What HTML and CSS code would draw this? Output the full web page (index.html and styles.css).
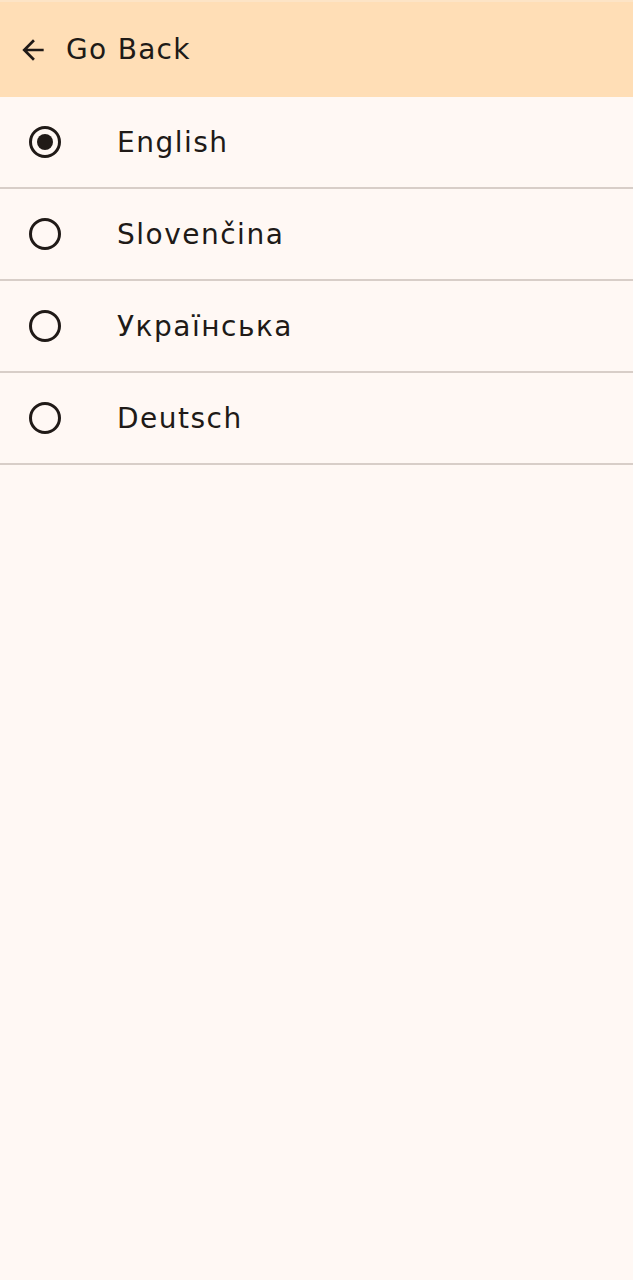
FILE: index.html
```html
<!DOCTYPE html>
<html lang="en">
<head>
<meta charset="utf-8">
<title>Language</title>
<link rel="stylesheet" href="styles.css">
</head>
<body>
<header class="topbar">
  <button class="back" type="button">
    <svg class="back-icon" viewBox="0 0 24 24" width="32" height="32" aria-hidden="true">
      <path d="M20 11H7.83l5.59-5.59L12 4l-8 8 8 8 1.41-1.41L7.83 13H20v-2z" fill="currentColor"/>
    </svg>
    <span class="back-label">Go Back</span>
  </button>
</header>
<main class="list">
  <label class="row">
    <span class="radio checked"><span class="dot"></span></span>
    <span class="label">English</span>
  </label>
  <label class="row">
    <span class="radio"></span>
    <span class="label">Slovenčina</span>
  </label>
  <label class="row">
    <span class="radio"></span>
    <span class="label">Українська</span>
  </label>
  <label class="row">
    <span class="radio"></span>
    <span class="label">Deutsch</span>
  </label>
</main>
</body>
</html>
```
FILE: styles.css
```css
html, body {
  margin: 0;
  padding: 0;
  background: #fff8f4;
  height: 100%;
}
body {
  font-family: "DejaVu Sans", "Open Sans", sans-serif;
  color: #201a17;
}
.topbar {
  height: 95px;
  border-top: 2px solid #fde4c6;
  background: #ffdeb6;
  display: flex;
  align-items: center;
  padding-left: 17px;
}
.back {
  display: flex;
  align-items: center;
  gap: 17px;
  background: none;
  border: 0;
  padding: 0;
  color: #201a17;
  font: inherit;
}
.back-icon {
  display: block;
}
.back-label {
  font-size: 28px;
  letter-spacing: 1.3px;
  font-weight: 400;
}
.list {
  display: flex;
  flex-direction: column;
}
.row {
  height: 90px;
  border-bottom: 2px solid #d8cec8;
  display: flex;
  align-items: center;
  padding-left: 29px;
  gap: 56px;
}
.radio {
  width: 32px;
  height: 32px;
  box-sizing: border-box;
  border: 3px solid #201a17;
  border-radius: 50%;
  display: flex;
  align-items: center;
  justify-content: center;
}
.dot {
  width: 16px;
  height: 16px;
  border-radius: 50%;
  background: #201a17;
}
.label {
  font-size: 28px;
  letter-spacing: 1.5px;
}
```
